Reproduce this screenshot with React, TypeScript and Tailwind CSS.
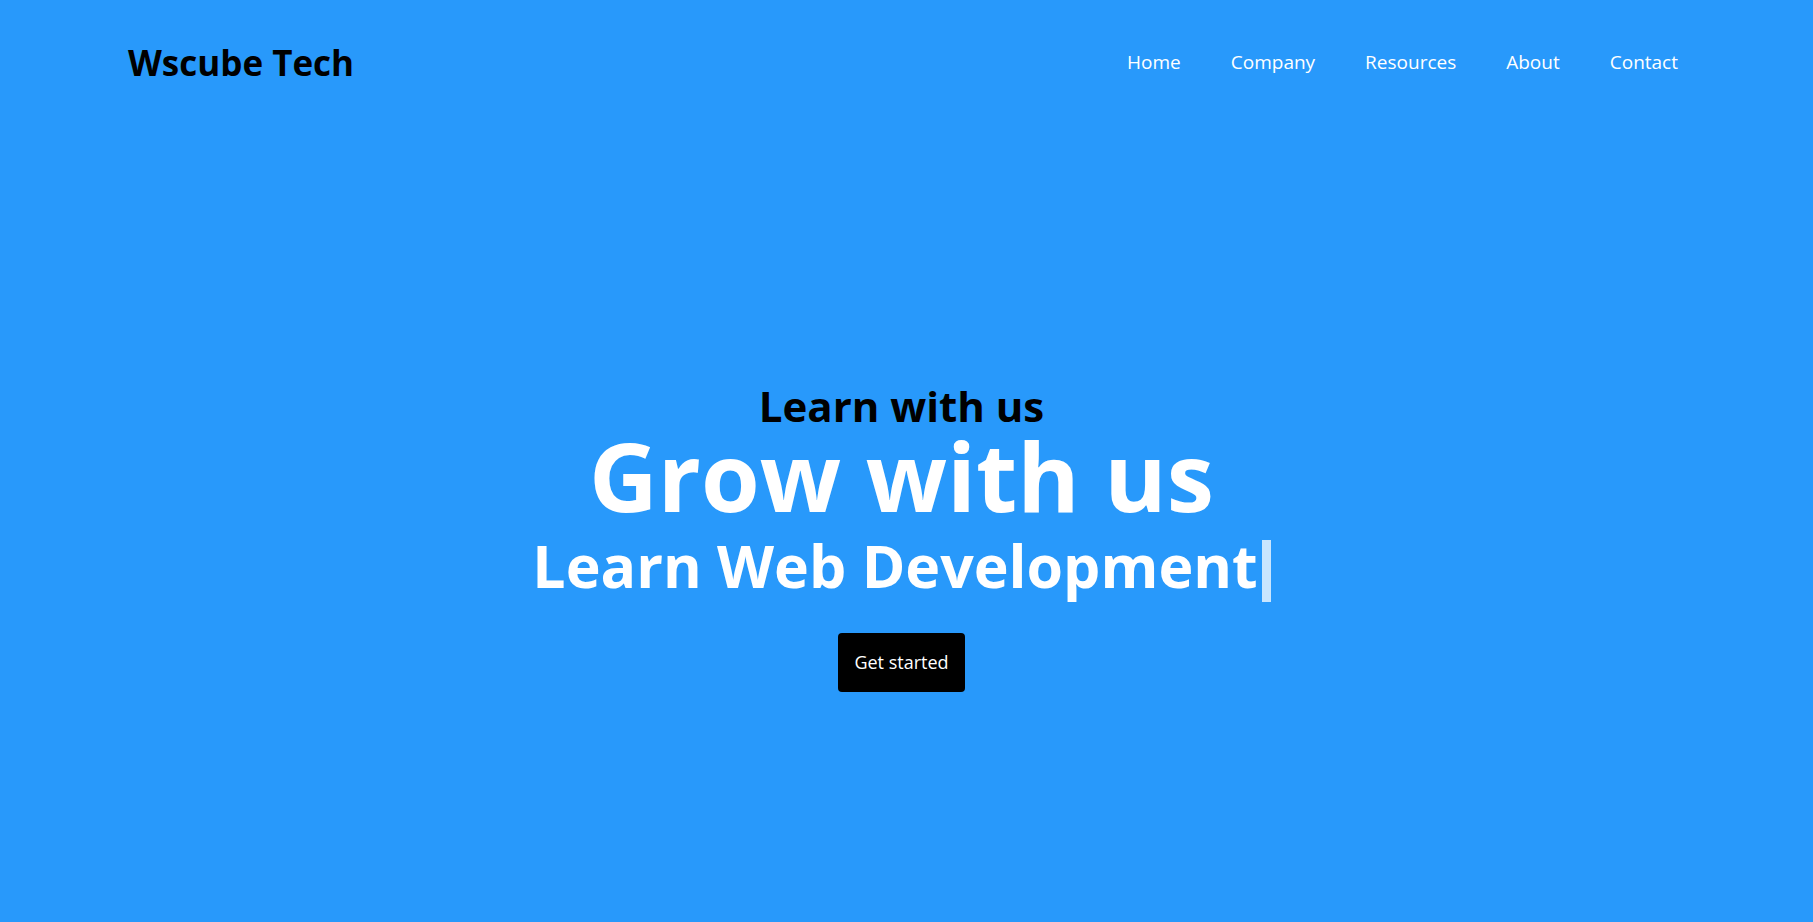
const navLinks = ["Home", "Company", "Resources", "About", "Contact"];

export default function App() {
  return (
    <div className="min-h-[922px] bg-[#2899fb] font-['Open_Sans',sans-serif]">
      <header className="flex h-[124px] items-center justify-between pl-[128px] pr-[135px]">
        <h1 className="text-[35px] leading-none font-bold text-black">Wscube Tech</h1>
        <nav>
          <ul className="flex gap-[50px] text-[19px] leading-none text-white">
            {navLinks.map((link) => (
              <li key={link}>
                <a href="#">{link}</a>
              </li>
            ))}
          </ul>
        </nav>
      </header>

      <section className="flex flex-col items-center pt-[261px] pr-[10px] text-center">
        <h3 className="text-[42px] leading-none font-bold text-black">Learn with us</h3>
        <h1 className="mt-[1px] text-[95px] leading-none font-bold text-white">Grow with us</h1>
        <h2 className="mt-[13px] text-[59px] leading-none font-bold text-white">
          Learn Web Development
          <span className="ml-[4px] inline-block h-[62px] w-[9px] bg-white/75 align-[-14px]"></span>
        </h2>
        <button className="mt-[31px] rounded-[4px] bg-black px-[16px] py-[16px] text-[18px] leading-[27px] text-white">
          Get started
        </button>
      </section>
    </div>
  );
}
